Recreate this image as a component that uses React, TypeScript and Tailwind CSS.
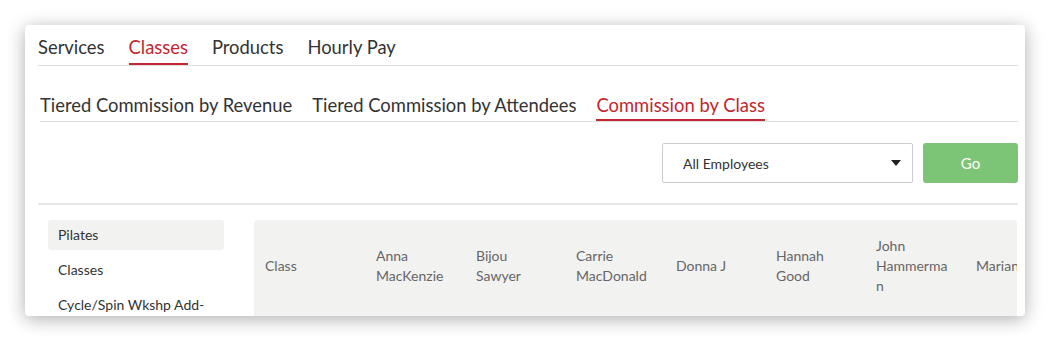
import React from "react";

const topTabs = ["Services", "Classes", "Products", "Hourly Pay"];
const subTabs = ["Tiered Commission by Revenue", "Tiered Commission by Attendees", "Commission by Class"];
const classes = ["Pilates", "Classes", "Cycle/Spin Wkshp Add-ons"];
const employees = ["Anna MacKenzie", "Bijou Sawyer", "Carrie MacDonald", "Donna J", "Hannah Good", "John Hammerman", "Marian Lee"];

export default function App() {
  return (
    <div className="min-h-[341px] bg-white pt-[25px] pl-[25px]" style={{ fontFamily: "Lato, 'Open Sans', sans-serif" }}>
      <div className="w-[1000px] h-[291px] overflow-hidden rounded-[4px] bg-white pl-[13px] pr-[7px] shadow-[0_3px_18px_rgba(0,0,0,0.32)]">
        {/* top tabs */}
        <div className="flex gap-6 border-b border-[#dddddd] pt-[10px]">
          {topTabs.map((t) => (
            <div
              key={t}
              className={
                "pb-[4px] text-[18.4px] leading-[24px] border-b-2 " +
                (t === "Classes" ? "text-[#c3262e] border-[#c3262e]" : "text-[#333333] border-transparent")
              }
            >
              {t}
            </div>
          ))}
        </div>

        {/* sub tabs */}
        <div className="ml-[2px] mt-[27px] flex gap-[20px] border-b border-[#dddddd]">
          {subTabs.map((t, i) => (
            <div
              key={t}
              className={
                "pb-[2px] text-[18.4px] leading-[24px] border-b-2 " +
                (i === 2 ? "text-[#c3262e] border-[#c3262e]" : "text-[#333333] border-transparent")
              }
            >
              {t}
            </div>
          ))}
        </div>

        {/* filter */}
        <div className="flex justify-end gap-[10px] pt-[21px] pb-[20px] border-b-2 border-[#e8e8e8]">
          <div className="flex h-[40px] w-[251px] items-center justify-between rounded-[2px] border border-[#cccccc] pl-[20px] pr-[11px] text-[14px] text-[#333333]">
            <span>All Employees</span>
            <svg width="10" height="6" viewBox="0 0 10 6">
              <path d="M0 0h10L5 6z" fill="#222" />
            </svg>
          </div>
          <button className="h-[40px] w-[95px] rounded-[3px] bg-[#7cc576] text-[15px] text-white">Go</button>
        </div>

        {/* content */}
        <div className="flex pt-[15px]">
          <div className="ml-[10px] flex w-[176px] shrink-0 flex-col gap-[5px]">
            {classes.map((c, i) => (
              <div
                key={c}
                className={"min-h-[30px] rounded-[3px] px-[10px] py-[5px] text-[14px] leading-[20px] text-[#333333] " + (i === 0 ? "bg-[#f2f2f1]" : "")}
              >
                {c}
              </div>
            ))}
          </div>
          <div className="ml-[30px] w-[763px] shrink-0 overflow-hidden rounded-t-[4px] bg-[#f2f2f1]">
            <table className="w-[811px] table-fixed border-collapse text-left">
              <thead>
                <tr>
                  <th className="w-[111px] px-[11px] py-[16px] align-middle text-[14px] font-normal leading-[20px] text-[#666666]">Class</th>
                  {employees.map((e) => (
                    <th
                      key={e}
                      className="w-[100px] px-[11px] py-[16px] align-middle text-[14px] font-normal leading-[20px] text-[#666666] break-words"
                    >
                      {e}
                    </th>
                  ))}
                </tr>
              </thead>
            </table>
          </div>
        </div>
      </div>
    </div>
  );
}
